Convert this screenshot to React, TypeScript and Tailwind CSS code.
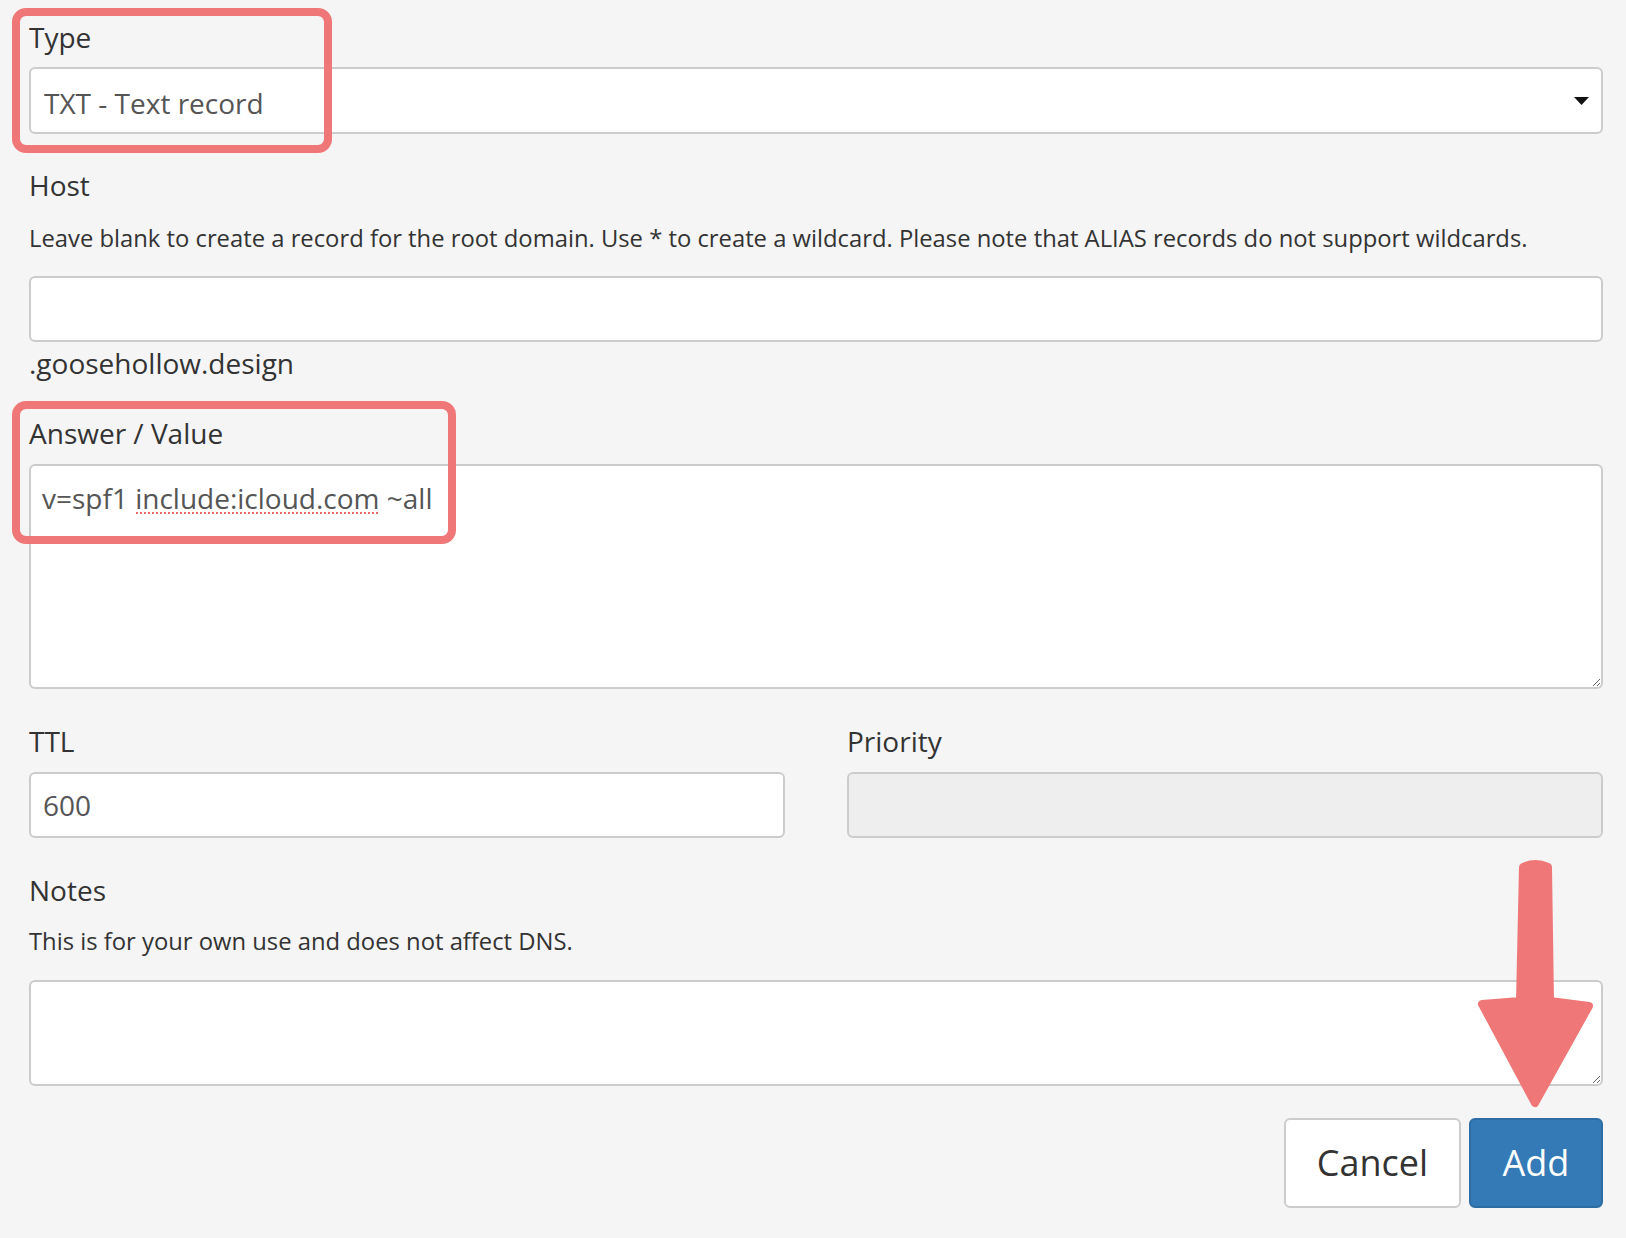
import React from "react";

const label = "block text-[28px] leading-[40px] text-[#333333]";
const help = "block text-[23.8px] leading-[34px] text-[#333333]";
const field =
  "block w-full border-2 border-[#cccccc] rounded-[6px] text-[28px] text-[#555555] outline-none";

export default function App() {
  return (
    <div
      className="relative min-h-screen w-full bg-[#f5f5f5] pl-[29px] pr-[23px] pt-[17px]"
      style={{ fontFamily: '"Open Sans", "Noto Sans", sans-serif' }}
    >
      <form className="flex flex-col" onSubmit={(e) => e.preventDefault()}>
        {/* Type */}
        <label className={label}>Type</label>
        <div className="relative mt-[10px]">
          <select
            className={`${field} h-[67px] appearance-none bg-white pl-[13px] pr-[40px] pt-[4px]`}
            defaultValue="TXT"
          >
            <option value="A">A - Address record</option>
            <option value="TXT">TXT - Text record</option>
          </select>
          <svg
            className="pointer-events-none absolute right-[14px] top-1/2 -translate-y-1/2"
            width="15"
            height="8"
            viewBox="0 0 15 8"
          >
            <path d="M0 0 H15 L7.5 8 Z" fill="#111111" />
          </svg>
        </div>

        {/* Host */}
        <label className={`${label} mt-[31px]`}>Host</label>
        <span className={`${help} mt-[16px]`}>
          Leave blank to create a record for the root domain. Use * to create a wildcard. Please
          note that ALIAS records do not support wildcards.
        </span>
        <input className={`${field} mt-[21px] h-[66px] bg-white px-[13px]`} type="text" />
        <span className="mt-[1px] block text-[28px] leading-[40px] text-[#333333]">
          .goosehollow.design
        </span>

        {/* Answer / Value */}
        <label className={`${label} mt-[30px]`}>Answer / Value</label>
        <div className="relative mt-[11px]">
          <textarea
            className={`${field} h-[225px] resize-y bg-white px-[11px] pt-[12px] leading-[40px]`}
            spellCheck={false}
            defaultValue="v=spf1 include:icloud.com ~all"
          />
          <span className="pointer-events-none absolute left-[107px] top-[48px] w-[242px] border-t-[2px] border-dotted border-[#ee6a6a]" />
        </div>

        {/* TTL / Priority */}
        <div className="mt-[32px] grid grid-cols-2 gap-x-[62px]">
          <div>
            <label className={label}>TTL</label>
            <input
              className={`${field} mt-[11px] h-[66px] bg-white px-[12px]`}
              type="text"
              defaultValue="600"
            />
          </div>
          <div>
            <label className={label}>Priority</label>
            <input
              className={`${field} mt-[11px] h-[66px] bg-[#eeeeee] px-[12px]`}
              type="text"
              disabled
            />
          </div>
        </div>

        {/* Notes */}
        <label className={`${label} mt-[32px]`}>Notes</label>
        <span className={`${help} mt-[14px]`}>This is for your own use and does not affect DNS.</span>
        <textarea
          className={`${field} mt-[22px] h-[106px] resize-y bg-white px-[11px] py-[10px]`}
        />

        {/* Actions */}
        <div className="mt-[32px] flex justify-end gap-[8px]">
          <button
            type="button"
            className="h-[90px] w-[177px] rounded-[6px] border-2 border-[#cccccc] bg-white text-[36px] text-[#333333]"
          >
            Cancel
          </button>
          <button
            type="submit"
            className="h-[90px] w-[134px] rounded-[6px] border-2 border-[#2e6da4] bg-[#337ab7] text-[36px] text-white"
          >
            Add
          </button>
        </div>
      </form>

      {/* annotations */}
      <div className="pointer-events-none absolute left-[12px] top-[8px] h-[145px] w-[320px] rounded-[14px] border-[8px] border-[#f07777]" />
      <div className="pointer-events-none absolute left-[12px] top-[401px] h-[143px] w-[444px] rounded-[14px] border-[8px] border-[#f07777]" />
      <svg
        className="pointer-events-none absolute left-[1470px] top-[855px]"
        width="130"
        height="262"
        viewBox="0 0 130 262"
      >
        <path
          d="M53 12 Q65 6 78 12 L80 146 L119 151 L65 248 L12 149 L50 146 Z"
          fill="#f07777"
          stroke="#f07777"
          strokeWidth="8"
          strokeLinejoin="round"
        />
      </svg>
    </div>
  );
}
